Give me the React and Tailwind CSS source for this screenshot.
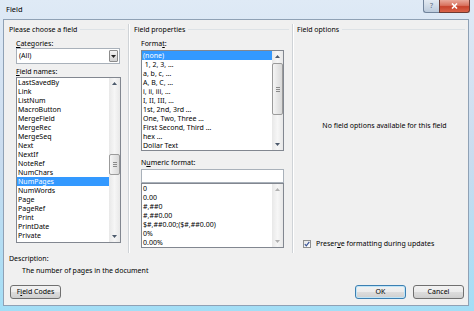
import React from "react";

const FIELD_NAMES = [
  "LastSavedBy", "Link", "ListNum", "MacroButton", "MergeField", "MergeRec",
  "MergeSeq", "Next", "NextIf", "NoteRef", "NumChars", "NumPages", "NumWords",
  "Page", "PageRef", "Print", "PrintDate", "Private",
];

const FORMATS = [
  "(none)", " 1, 2, 3, …", "a, b, c, …", "A, B, C, …", "i, ii, iii, …",
  "I, II, III, …", "1st, 2nd, 3rd …", "One, Two, Three …",
  "First Second, Third …", "hex …", "Dollar Text",
];

const NUMERIC = ["0", "0.00", "#,##0", "#,##0.00", "$#,##0.00;($#,##0.00)", "0%", "0.00%"];

function Arrow({ up, dim }) {
  return (
    <div className="h-[11px] flex items-center justify-center">
      <svg width="5" height="3" viewBox="0 0 5 3">
        <path d={up ? "M0 3L2.5 0L5 3Z" : "M0 0L5 0L2.5 3Z"} fill={dim ? "#b0b0b0" : "#4d5a6c"} />
      </svg>
    </div>
  );
}

function ScrollBar({ thumb, dim }) {
  return (
    <div className="w-[11px] shrink-0 flex flex-col bg-gradient-to-r from-[#e8e8e8] via-[#f6f6f6] to-[#e8e8e8]">
      <Arrow up dim={dim} />
      <div className="flex-1 flex flex-col">
        {thumb && (
          <div className={`${thumb} rounded-[2px] border border-[#9b9b9b] bg-gradient-to-r from-[#f5f5f5] to-[#d9d9d9] flex flex-col items-center justify-center gap-[1px]`}>
            <div className="w-[4px] h-px bg-[#8a8a8a]" />
            <div className="w-[4px] h-px bg-[#8a8a8a]" />
            <div className="w-[4px] h-px bg-[#8a8a8a]" />
          </div>
        )}
      </div>
      <Arrow dim={dim} />
    </div>
  );
}

function ListBox({ items, selected, size, thumb, dim }) {
  return (
    <div className={`${size} border border-[#828790] bg-white flex`}>
      <div className="flex-1 flex flex-col overflow-hidden">
        {items.map((item) => (
          <div
            key={item}
            className={`h-[9px] leading-[9px] pl-[1px] whitespace-pre ${item === selected ? "bg-[#3399ff] text-white" : ""}`}
          >
            {item}
          </div>
        ))}
      </div>
      <ScrollBar thumb={thumb} dim={dim} />
    </div>
  );
}

function Header({ children, pad }) {
  return (
    <div className={`${pad} h-[9px] flex items-center leading-[9px]`}>
      <span className="whitespace-nowrap">{children}</span>
      <div className="flex-1 ml-[3px] mr-[3px] h-px bg-[#dde2e6]" />
    </div>
  );
}

function Button({ children, className = "" }) {
  return (
    <div
      className={`h-[14px] w-[51px] rounded-[3px] border flex items-center justify-center bg-[linear-gradient(#f2f2f2,#ebebeb_50%,#dddddd_50%,#cfcfcf)] ${className}`}
    >
      {children}
    </div>
  );
}

export default function App() {
  return (
    <div className="w-[474px] h-[311px] flex flex-col overflow-hidden bg-gradient-to-b from-[#dfeaf6] via-[#cadcef] to-[#a2def6] font-['Noto_Sans',sans-serif] text-[7px] text-black">
      {/* title bar */}
      <div className="h-[19px] shrink-0 flex items-start pl-[6px]">
        <span className="mt-[4px] text-[7.5px] leading-[10px]">Field</span>
        <div className="ml-auto mr-[4px] flex">
          <div className="w-[16px] h-[13px] rounded-bl-[3px] border border-r-0 border-t-0 border-[#71849c] bg-gradient-to-b from-[#e3eaf2] to-[#bccbdc] flex items-center justify-center text-[7px] text-[#5b6b80]">
            ?
          </div>
          <div className="w-[31px] h-[13px] rounded-br-[3px] border border-t-0 border-[#6e3a33] bg-[linear-gradient(#e9a99b,#d9735f_45%,#c7432c_55%,#d9644b)] flex items-center justify-center">
            <svg width="7" height="6" viewBox="0 0 7 6">
              <path d="M1 0.5L6 5.5M6 0.5L1 5.5" stroke="#fff" strokeWidth="1.6" />
            </svg>
          </div>
        </div>
      </div>

      {/* dialog body */}
      <div className="flex-1 flex pl-[3px] pr-[5px] pb-[5px]">
        <div className="flex-1 flex flex-col bg-[#f0f0f0] border border-[#8fa1b5]">
          <div className="mt-[4px] h-[229px] flex">
            {/* left column */}
            <div className="w-[125px] pt-[1px] flex flex-col border-r border-[#cfd3d7] shadow-[1px_0_0_#ffffff]">
              <Header pad="pl-[5px]">Please choose a field</Header>
              <div className="mt-[5px] ml-[12px] h-[9px] leading-[9px]">
                <span className="underline">C</span>ategories:
              </div>
              <div className="ml-[12px] w-[104px] h-[16px] border border-[#a9b1ba] bg-white flex items-center">
                <span className="pl-[2px] flex-1">(All)</span>
                <div className="mr-[1px] w-[9px] h-[12px] rounded-[1px] border border-[#8c8c8c] bg-gradient-to-b from-[#f4f4f4] to-[#d2d2d2] flex items-center justify-center">
                  <svg width="5" height="3" viewBox="0 0 5 3">
                    <path d="M0 0L5 0L2.5 3Z" fill="#222" />
                  </svg>
                </div>
              </div>
              <div className="mt-[3px] ml-[12px] h-[9px] leading-[9px]">
                <span className="underline">F</span>ield names:
              </div>
              <div className="mt-[1px] ml-[12px]">
                <ListBox items={FIELD_NAMES} selected="NumPages" size="w-[105px] h-[166px]" thumb="mt-[65px] h-[21px]" />
              </div>
            </div>

            {/* middle column */}
            <div className="w-[164px] pt-[1px] flex flex-col border-r border-[#cfd3d7] shadow-[1px_0_0_#ffffff]">
              <Header pad="pl-[5px]">Field properties</Header>
              <div className="mt-[5px] ml-[12px] h-[9px] leading-[9px]">
                Forma<span className="underline">t</span>:
              </div>
              <div className="mt-[2px] ml-[12px]">
                <ListBox items={FORMATS} selected="(none)" size="w-[143px] h-[101px]" thumb="mt-[1px] h-[52px]" />
              </div>
              <div className="mt-[7px] ml-[12px] h-[9px] leading-[9px]">
                N<span className="underline">u</span>meric format:
              </div>
              <div className="mt-[2px] ml-[12px] w-[143px] h-[14px] border border-[#a9b1ba] bg-white" />
              <div className="ml-[12px]">
                <ListBox items={NUMERIC} size="w-[143px] h-[65px]" dim />
              </div>
            </div>

            {/* right column */}
            <div className="flex-1 pt-[1px] flex flex-col">
              <Header pad="pl-[4px]">Field options</Header>
              <div className="mt-[87px] pl-[8px] text-center leading-[9px]">
                No field options available for this field
              </div>
              <div className="mt-auto mb-[5px] pl-[10px] flex items-center gap-[5px] h-[9px]">
                <div className="w-[8px] h-[8px] border border-[#8e8f8f] bg-gradient-to-br from-[#e6e6e6] to-white flex items-center justify-center">
                  <svg width="6" height="6" viewBox="0 0 6 6">
                    <path d="M0.8 3.2L2.3 4.9L5.3 0.8" stroke="#3a5597" strokeWidth="1.2" fill="none" />
                  </svg>
                </div>
                <span className="leading-[9px]">
                  Preser<span className="underline">v</span>e formatting during updates
                </span>
              </div>
            </div>
          </div>

          {/* description */}
          <div className="mt-[1px] pl-[5px] h-[9px] leading-[9px]">Description:</div>
          <div className="mt-[3px] pl-[18px] h-[9px] leading-[9px]">The number of pages in the document</div>

          {/* buttons */}
          <div className="mt-[10px] flex">
            <Button className="ml-[6px] border-[#707070]">
              F<span className="underline">i</span>eld Codes
            </Button>
            <div className="ml-auto mr-[4px] flex gap-[7px]">
              <Button className="border-[#3c7fb1] shadow-[inset_0_0_0_1px_#bfe5f8]">OK</Button>
              <Button className="border-[#707070]">Cancel</Button>
            </div>
          </div>
        </div>
      </div>
    </div>
  );
}
